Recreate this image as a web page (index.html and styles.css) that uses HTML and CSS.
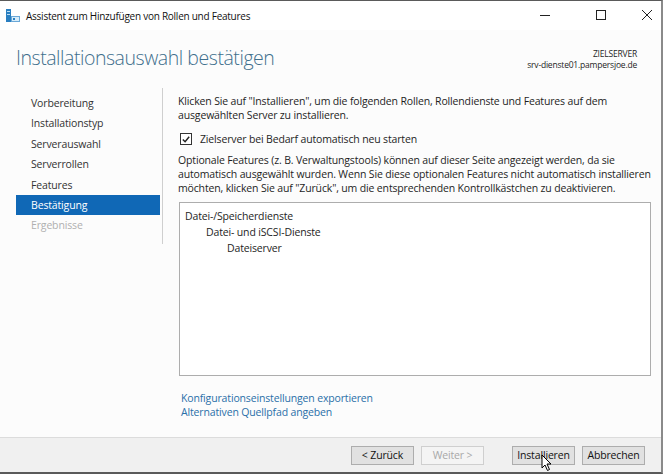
FILE: index.html
```html
<!DOCTYPE html>
<html lang="de">
<head>
<meta charset="utf-8">
<title>Assistent zum Hinzufügen von Rollen und Features</title>
<link rel="stylesheet" href="styles.css">
</head>
<body>
<div class="window">
  <div class="titlebar">
    <svg class="app-icon" width="16" height="16" viewBox="0 0 16 16">
      <rect x="1" y="1" width="5" height="13" fill="#2a7fc1"/>
      <rect x="2" y="3" width="3" height="1" fill="#bfe0f5"/>
      <rect x="2" y="6" width="3" height="1" fill="#bfe0f5"/>
      <rect x="6" y="8" width="9" height="6" fill="#6aa8d8"/>
      <rect x="7" y="9" width="7" height="4" fill="#d7ecf9"/>
      <rect x="8" y="10" width="2" height="2" fill="#2a7fc1"/>
    </svg>
    <span class="title-text">Assistent zum Hinzufügen von Rollen und Features</span>
    <div class="caption-buttons">
      <svg width="56" height="29" viewBox="0 0 56 29"><line x1="21" y1="14.5" x2="31" y2="14.5" stroke="#222" stroke-width="1"/></svg>
      <svg width="52" height="29" viewBox="0 0 52 29"><rect x="21.5" y="9.5" width="9" height="9" fill="none" stroke="#222" stroke-width="1"/></svg>
      <svg width="34" height="29" viewBox="0 0 34 29"><path d="M15 9 L25 19 M25 9 L15 19" stroke="#222" stroke-width="1"/></svg>
    </div>
  </div>
  <div class="header">
    <h1 class="page-title">Installationsauswahl bestätigen</h1>
    <div class="target">
      <div class="target-label">ZIELSERVER</div>
      <div class="target-name">srv-dienste01.pampersjoe.de</div>
    </div>
  </div>
  <div class="main">
    <nav class="nav">
      <div class="nav-item">Vorbereitung</div>
      <div class="nav-item">Installationstyp</div>
      <div class="nav-item">Serverauswahl</div>
      <div class="nav-item">Serverrollen</div>
      <div class="nav-item">Features</div>
      <div class="nav-item active">Bestätigung</div>
      <div class="nav-item disabled">Ergebnisse</div>
    </nav>
    <div class="content">
      <p class="text">Klicken Sie auf "Installieren", um die folgenden Rollen, Rollendienste und Features auf dem<br>ausgewählten Server zu installieren.</p>
      <label class="check">
        <span class="box"><svg width="11" height="11" viewBox="0 0 11 11"><path d="M2 5.5 L4.5 8 L9 2.5" fill="none" stroke="#222" stroke-width="1.6"/></svg></span>
        <span>Zielserver bei Bedarf automatisch neu starten</span>
      </label>
      <p class="text">Optionale Features (z. B. Verwaltungstools) können auf dieser Seite angezeigt werden, da sie<br>automatisch ausgewählt wurden. Wenn Sie diese optionalen Features nicht automatisch installieren<br>möchten, klicken Sie auf "Zurück", um die entsprechenden Kontrollkästchen zu deaktivieren.</p>
      <div class="listbox">
        <div class="li l0">Datei-/Speicherdienste</div>
        <div class="li l1">Datei- und iSCSI-Dienste</div>
        <div class="li l2">Dateiserver</div>
      </div>
      <div class="links">
        <a class="link">Konfigurationseinstellungen exportieren</a>
        <a class="link">Alternativen Quellpfad angeben</a>
      </div>
    </div>
  </div>
  <div class="footer">
    <button class="btn">&lt; Zurück</button>
    <button class="btn disabled">Weiter &gt;</button>
    <button class="btn primary">Installieren</button>
    <button class="btn">Abbrechen</button>
    <svg class="cursor" width="12" height="18" viewBox="0 0 12 18"><path d="M1 1 L1 14 L4 11 L6.5 16.5 L8.5 15.5 L6 10 L10 10 Z" fill="#fff" stroke="#000" stroke-width="1"/></svg>
  </div>
</div>
</body>
</html>
```
FILE: styles.css
```css
* { box-sizing: border-box; }
html, body { margin: 0; padding: 0; }
body {
  width: 663px;
  height: 474px;
  overflow: hidden;
  font-family: "Open Sans", "Noto Sans", sans-serif;
  font-size: 10.5px;
  letter-spacing: -0.15px;
  color: #1e1e1e;
  background: #fff;
}
.window {
  width: 663px;
  height: 474px;
  display: flex;
  flex-direction: column;
  border-top: 1px solid #5a5a5a;
  border-right: 2px solid #8a8a8a;
  border-bottom: 2px solid #5a5a5a;
  background: #fcfcfc;
  position: relative;
}
.titlebar {
  height: 29px;
  flex: none;
  display: flex;
  align-items: center;
  background: #fff;
  padding-left: 5px;
}
.app-icon { margin-right: 5px; }
.title-text { font-size: 10px; letter-spacing: -0.25px; color: #111; flex: 1; }
.caption-buttons { display: flex; }
.caption-buttons svg { display: block; }
.header {
  height: 58px;
  flex: none;
  display: flex;
  justify-content: space-between;
  align-items: flex-start;
  padding: 13px 24px 0 16px;
}
.page-title {
  margin: 0;
  font-weight: 300;
  font-size: 19.5px;
  letter-spacing: -0.45px;
  color: #3f6f8c;
  line-height: 30px;
}
.target { text-align: right; font-size: 8.5px; letter-spacing: -0.2px; line-height: 11px; padding-top: 5px; }
.main { flex: 1; display: flex; min-height: 0; }
.nav {
  width: 163px;
  flex: none;
  padding: 5px 0 8px 16px;
  display: flex;
  flex-direction: column;
  align-self: flex-start;
  border-right: 1px solid #cfcfcf;
}
.nav-item {
  height: 20.4px;
  line-height: 20.4px;
  padding-left: 15px;
  color: #333;
  width: 144px;
}
.nav-item.active { background: #1068b6; color: #fff; }
.nav-item.disabled { color: #b0b0b0; }
.content {
  flex: 1;
  padding: 6px 20px 0 15px;
  display: flex;
  flex-direction: column;
}
.text { margin: 0; line-height: 14px; white-space: nowrap; }
.check { display: flex; align-items: center; margin: 10px 0 7px 2px; height: 14px; }
.box {
  width: 12px; height: 12px;
  border: 1px solid #333;
  background: #fff;
  display: flex; align-items: center; justify-content: center;
  margin-right: 8px;
}
.box svg { display: block; }
.listbox {
  margin: 7px 0 0 1px;
  height: 174px;
  flex: none;
  border: 1px solid #adadad;
  background: #fff;
  padding: 5px 0 0 5px;
}
.li { line-height: 16px; }
.l1 { padding-left: 21px; }
.l2 { padding-left: 42px; }
.links { display: flex; flex-direction: column; padding: 15px 0 0 3px; }
.link { color: #2a6fa8; line-height: 14px; }
.footer {
  height: 35px;
  flex: none;
  border-top: 1px solid #dcdcdc;
  background: #f0f0f0;
  display: flex;
  align-items: center;
  justify-content: flex-end;
  padding-right: 16px;
  position: relative;
}
.btn {
  font-family: inherit;
  font-size: 10.5px;
  letter-spacing: -0.15px;
  width: 63px;
  height: 19px;
  margin-left: 7px;
  border: 1px solid #adadad;
  background: #e1e1e1;
  color: #111;
  padding: 0;
}
.btn.disabled { color: #a8a8a8; background: #f4f4f4; border-color: #cfcfcf; }
.btn.primary { margin-left: 28px; }
.cursor { position: absolute; left: 541px; top: 16px; }
```
